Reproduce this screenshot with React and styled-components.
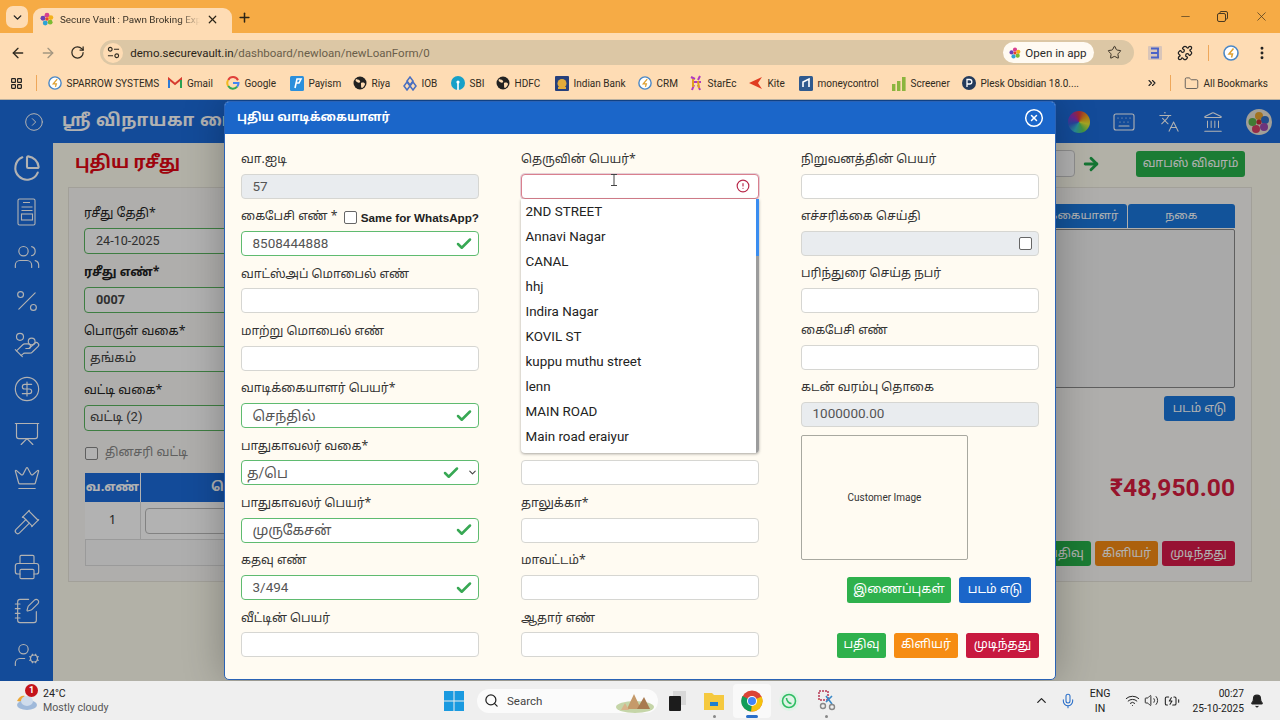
import React from "react";
import styled, { createGlobalStyle } from "styled-components";
import {
  ChevronDown, Plus, X, ArrowLeft, ArrowRight, RotateCw, Star, Puzzle, MoreVertical, ChevronsRight,
  Folder, Minus, Check, CircleAlert, CircleX, CircleChevronRight, ChartPie, Users, Percent, HandCoins,
  CircleDollarSign, Presentation, Crown, Gavel, Printer, NotebookPen, UserCog, Keyboard, Languages,
  Landmark, Search, Mic, Wifi, Volume2, BatteryCharging, Bell, ChevronUp, LayoutGrid,
} from "lucide-react";

const TA = `"Noto Sans Tamil", "Lohit Tamil", "Latha", "Noto Sans", "Liberation Sans", sans-serif`;
const UI = `Roboto, "Noto Sans Tamil", "Lohit Tamil", "Noto Sans", sans-serif`;

const Global = createGlobalStyle`
  html, body { margin: 0; padding: 0; width: 1280px; height: 720px; overflow: hidden; }
  * { box-sizing: border-box; }
  body { font-family: ${UI}; }
`;

const Screen = styled.div`display:flex;flex-direction:column;width:1280px;height:720px;overflow:hidden;background:#eee;`;

/* ---- Browser ---- */
const TabStrip = styled.div`display:flex;align-items:flex-end;height:33px;background:#f6ab45;padding-left:6px;flex:none;`;
const TabMenu = styled.div`width:22px;height:22px;margin-bottom:5px;border-radius:7px;background:#fedcb4;display:flex;align-items:center;justify-content:center;color:#222;`;
const Tab = styled.div`margin-left:5px;width:199px;height:25px;background:#fedcb4;border-radius:9px 9px 0 0;display:flex;align-items:center;padding:0 13px 3px 7px;gap:6px;`;
const TabTitle = styled.div`flex:1;font:9.9px Roboto,sans-serif;color:#3a3226;white-space:nowrap;overflow:hidden;
  -webkit-mask-image:linear-gradient(90deg,#000 85%,transparent);mask-image:linear-gradient(90deg,#000 85%,transparent);`;
const NewTab = styled.div`margin:0 0 6px 1px;width:22px;height:20px;display:flex;align-items:center;justify-content:center;color:#2b2417;`;
const WinControls = styled.div`margin-left:auto;display:flex;align-self:flex-start;padding-top:9px;gap:25.5px;padding-right:11.5px;color:#4a3a22;align-items:center;`;
const Toolbar = styled.div`height:34px;background:#fedcb4;display:flex;align-items:center;padding:5px 10px 0;color:#3a3226;flex:none;`;
const NavBtn = styled.div`width:30px;display:flex;color:${p=>p.$c||"#2f2a20"};line-height:0;padding-left:${p=>p.$p||0}px;`;
const Address = styled.div`margin-left:1px;width:1034px;height:25px;border-radius:13px;background:#dcc7a5;display:flex;align-items:center;padding:0 12.5px 0 3px;flex:none;`;
const SiteIcon = styled.div`width:20px;height:20px;border-radius:50%;background:#fedcb4;display:flex;align-items:center;justify-content:center;margin-right:7px;`;
const Url = styled.div`font:11.5px Roboto,sans-serif;color:#6a5e4a;flex:1;span{color:#2a2418;}`;
const AppPill = styled.div`width:91px;height:21px;border-radius:11px;background:#fffaf2;display:flex;align-items:center;gap:4px;padding-left:6px;font:11.6px Roboto,sans-serif;color:#2a2a2a;margin-right:12.5px;`;
const ToolIcons = styled.div`display:flex;align-items:center;margin-left:14px;gap:14.7px;line-height:0;`;
const Sep = styled.div`width:1px;height:16px;background:#eea75a;`;
const Bookmarks = styled.div`height:33px;background:#fedcb4;display:flex;align-items:center;padding-left:9.5px;font:10px Roboto,sans-serif;color:#302a20;border-bottom:1px solid #b9b0a0;flex:none;`;
const Bm = styled.div`display:flex;align-items:center;gap:5px;width:${p=>p.$w}px;white-space:nowrap;overflow:hidden;flex:none;`;
const BmDivider = styled.div`width:1px;height:16px;background:#eea75a;margin:${p=>p.$m};flex:none;`;

/* ---- App behind ---- */
const AppArea = styled.div`position:relative;height:581px;background:#1c6cdc;overflow:hidden;display:flex;flex-direction:column;flex:none;`;
const AppHeader = styled.div`height:43px;display:flex;align-items:center;color:#fff;flex:none;`;
const HeadToggle = styled.span`margin-left:24px;line-height:0;`;
const Brand = styled.div`font:bold 17px ${TA};letter-spacing:.6px;margin-left:18px;white-space:nowrap;flex:1;overflow:hidden;`;
const HeadIcons = styled.div`display:flex;align-items:center;width:204px;justify-content:space-between;margin-right:8px;`;
const Wheel = styled.div`width:22px;height:22px;border-radius:50%;background:conic-gradient(#e63946,#f4a21e,#ecec33,#5fd35f,#38c7d6,#3a62e0,#9933cc,#e63946);`;
const AppBody = styled.div`flex:1;display:flex;min-height:0;`;
const Sidebar = styled.div`width:53px;flex:none;display:flex;flex-direction:column;align-items:center;padding-top:11px;gap:16.3px;color:#fff;`;
const Main = styled.div`flex:1;background:#fffef0;padding:7px 35px 0 15px;display:flex;flex-direction:column;min-width:0;`;
const TopRow = styled.div`height:27px;display:flex;align-items:center;flex:none;padding-left:7px;`;
const PageTitle = styled.div`font:bold 17.5px ${TA};color:#e30613;flex:1;`;
const SmallInput = styled.div`width:60px;height:27px;border:1px solid #ccc;border-radius:4px;background:#fff;margin-right:6px;`;
const BackBtn = styled.div`margin-left:35px;width:109px;height:26px;border-radius:3px;background:#28b24b;color:#fff;font:12.2px ${TA};display:flex;align-items:center;justify-content:center;`;
const Card = styled.div`margin-top:10px;height:395px;background:#fbfaf6;border:1px solid #e8e6dc;padding:16px 16px 16px 15px;display:flex;justify-content:space-between;margin-right:-7px;flex:none;`;
const LeftCol = styled.div`width:400px;display:flex;flex-direction:column;`;
const BgLabel = styled.div`height:${p=>p.$h||27}px;flex:none;font:${p=>p.$b?"bold ":""}12.3px ${TA};color:#222;display:flex;align-items:flex-end;padding-bottom:6px;`;
const BgInput = styled.div`height:26px;flex:none;border:1px solid #5ab55f;border-radius:4px;padding-bottom:2px;font:${p=>p.$b?"bold ":""}${p=>p.$t?"13px":"12.6px"} ${UI};color:#444;display:flex;align-items:center;padding-left:${p=>p.$p||11}px;background:#fff;margin-bottom:6px;`;
const CheckRow = styled.div`display:flex;align-items:center;gap:7px;font:12.4px ${TA};color:#888;margin:6px 0 10px 1px;height:20px;flex:none;`;
const Tick = styled.div`width:13px;height:13px;border:1.5px solid #888;border-radius:2px;background:#fff;`;
const BgTable = styled.div`display:grid;grid-template-columns:56px 1fr;grid-template-rows:29px 38px 26px;margin-left:1px;font:13px ${TA};flex:none;`;
const Th = styled.div`background:#1c6cdc;color:#fff;font-weight:bold;display:flex;align-items:center;justify-content:${p=>p.$j||"center"};border-right:1px solid #fff;padding-left:${p=>p.$p||0}px;`;
const Td = styled.div`display:flex;align-items:center;justify-content:center;border-right:1px solid #ddd;border-bottom:1px solid #ddd;background:#fff;color:#333;padding:0 4px;`;
const TdWide = styled.div`grid-column:1 / 3;border:1px solid #ddd;border-top:0;background:#fafafa;`;
const TdInput = styled.div`width:100%;height:26px;border:1px solid #bbb;border-radius:4px;`;
const RightCol = styled.div`width:216px;display:flex;flex-direction:column;`;
const BgTabs = styled.div`display:grid;grid-template-columns:1fr 1fr;gap:1px;height:24px;flex:none;`;
const BgTab = styled.div`background:#1a78dd;color:#fff;font:11.6px ${TA};display:flex;align-items:center;justify-content:${p=>p.$j||"center"};border-radius:3px 3px 0 0;padding-right:${p=>p.$p||0}px;`;
const BgPanel = styled.div`height:159px;border:1px solid #888;border-radius:2px;margin-top:1px;background:#f2f2f2;flex:none;`;
const BgEnd = styled.div`display:flex;justify-content:flex-end;gap:4px;margin-top:${p=>p.$m}px;flex:none;`;
const BgBtn = styled.div`width:${p=>p.$w}px;height:25px;border-radius:3px;background:${p=>p.$c};color:#fff;font:12.2px ${TA};display:flex;align-items:center;justify-content:center;`;
const Amount = styled.div`font:bold 24.6px Roboto,sans-serif;color:#d91c3f;text-align:right;margin-top:52px;line-height:30px;flex:none;`;

/* ---- Modal ---- */
const Overlay = styled.div`position:absolute;inset:0;background:rgba(0,0,0,.3);display:flex;justify-content:center;padding-top:1px;`;
const Modal = styled.div`width:832px;height:579px;background:#fffbf2;border:1px solid #2a62b5;border-radius:5px;box-shadow:0 0 40px rgba(0,0,0,.28);display:flex;flex-direction:column;overflow:hidden;flex:none;`;
const ModalHead = styled.div`height:32px;background:#1b66c9;color:#fff;display:flex;align-items:center;justify-content:space-between;padding:0 11px 0 12px;font:bold 12px ${TA};flex:none;`;
const ModalGrid = styled.div`padding:7.5px 15px 0 16px;display:grid;grid-template-columns:238px 238px 238px;column-gap:42px;`;
const Col = styled.div`display:flex;flex-direction:column;position:relative;`;
const Field = styled.div`display:flex;flex-direction:column;height:${p=>p.$pitch||57.33}px;flex:none;`;
const Label = styled.div`height:${p=>(p.$pitch||57.33)-25}px;padding-top:5px;display:flex;align-items:center;justify-content:space-between;font:12.2px ${TA};color:#333;white-space:nowrap;`;
const borders = { plain:"#d6d6d2", valid:"#5fbb70", invalid:"#d9808e", disabled:"#d6d6d2" };
const Box = styled.div`position:relative;height:25px;flex:none;border:${p=>p.$s==="valid"?"1.5px":"1px"} solid ${p=>borders[p.$s||"plain"]};border-radius:4px;
  background:${p=>p.$s==="disabled"?"#e9ecef":"#fff"};display:flex;align-items:center;justify-content:space-between;padding:0 ${p=>p.$r||5.5}px 0 ${p=>p.$l||10.5}px;
  font:${p=>p.$n?"13.5px":"14px"}/1 ${UI};color:#555;box-shadow:${p=>p.$s==="invalid"?"0 0 0 1px rgba(180,130,170,.35)":"none"};`;
const Same = styled.span`display:flex;align-items:center;gap:4px;font:bold 11.7px "Liberation Sans",sans-serif;color:#222;`;
const SmallCheck = styled.span`width:13px;height:13px;border:1px solid #666;border-radius:2px;background:#fff;display:inline-block;`;
const SelectEnd = styled.span`display:flex;align-items:center;gap:7.5px;margin-right:-5.5px;color:#444;`;
const Dropdown = styled.div`position:absolute;left:0;top:57px;width:238px;height:254.5px;background:#fff;box-shadow:0 1px 3px rgba(0,0,0,.35);border-radius:0 0 4px 4px;display:flex;z-index:2;overflow:hidden;`;
const DItems = styled.div`flex:1;`;
const DItem = styled.div`height:25px;padding-left:4.5px;font:13.4px/25px Roboto,sans-serif;color:#222;`;
const Scroll = styled.div`width:3px;background:#9c9c9c;`;
const Thumb = styled.div`height:57px;background:#3a8df0;`;
const ICursor = styled.div`position:absolute;left:88px;top:-1px;line-height:0;`;
const ImgBox = styled.div`margin-top:8.5px;width:167px;height:125px;flex:none;border:1px solid #a8a8a0;border-radius:2px;display:flex;align-items:center;justify-content:center;font:10px Roboto,sans-serif;color:#333;`;
const BtnRow = styled.div`display:flex;justify-content:flex-end;gap:8px;margin-top:${p=>p.$m}px;padding-right:${p=>p.$r||0}px;flex:none;`;
const Btn = styled.div`width:${p=>p.$w}px;height:25.5px;border-radius:2.5px;background:${p=>p.$c};color:#fff;font:12.4px ${TA};display:flex;align-items:center;justify-content:center;`;

/* ---- Taskbar ---- */
const Taskbar = styled.div`height:39px;background:#efefef;display:flex;align-items:center;color:#222;flex:none;`;
const Weather = styled.div`display:flex;align-items:center;gap:4px;width:444px;padding-left:15px;position:relative;flex:none;`;
const Badge = styled.div`position:absolute;left:25px;top:-3px;width:13px;height:13px;border-radius:50%;background:#c4141c;color:#fff;font:bold 9px/13px Roboto,sans-serif;text-align:center;`;
const WText = styled.div`font:10.6px/14px Roboto,sans-serif;color:#222;span{display:block;color:#555;}`;
const WinWrap = styled.span`line-height:0;`;
const SearchBox = styled.div`margin-left:13px;width:181px;height:24px;border-radius:12px;background:#fbfbfb;display:flex;align-items:center;padding:0 3px 0 7px;gap:8px;font:11.5px Roboto,sans-serif;color:#444;`;
const SearchWord = styled.span`flex:1;`;
const Center = styled.div`display:flex;align-items:center;`;
const Task = styled.div`width:37.5px;height:34px;display:flex;align-items:center;justify-content:center;position:relative;background:${p=>p.$on?"#f9f9f9":"transparent"};border-radius:4px;`;
const Dot = styled.div`position:absolute;bottom:0;left:50%;margin-left:${p=>p.$w?-p.$w/2:-1.5}px;width:${p=>p.$w||3}px;height:2.5px;border-radius:2px;background:${p=>p.$c||"#888"};`;
const Tray = styled.div`margin-left:auto;display:flex;align-items:center;padding-right:16px;`;
const Lang = styled.div`font:10.6px/15px Roboto,sans-serif;text-align:center;width:32px;margin:0 8.5px 0 8px;color:#222;`;
const Clock = styled.div`font:10.2px/15px Roboto,sans-serif;text-align:right;margin:0 6px 0 13px;color:#222;`;
const TrayIcons = styled.div`display:flex;gap:${p=>p.$g}px;align-items:center;color:#222;`;

const Favicon = ({ s = 14 }) => (
  <svg width={s} height={s} viewBox="0 0 16 16"><circle cx="8" cy="3.6" r="2.8" fill="#d93f8f"/><circle cx="12.4" cy="6.4" r="2.8" fill="#f3b11b"/><circle cx="11.6" cy="11.6" r="2.8" fill="#7cbb32"/><circle cx="6" cy="12.6" r="2.8" fill="#2ea3d6"/><circle cx="3.4" cy="7.2" r="2.8" fill="#6b3fb5"/><circle cx="8" cy="8" r="2" fill="#e8472c"/></svg>
);
const Sparrow = ({ s = 14 }) => <svg width={s} height={s} viewBox="0 0 16 16"><circle cx="8" cy="8" r="7" fill="#fff" stroke="#4b87c5" strokeWidth="1.6"/><path d="M10.5 3.5 6 9h3.5l-1 3.5" fill="none" stroke="#e0a030" strokeWidth="1.5"/></svg>;
const Gmail = () => <svg width="14" height="12" viewBox="0 0 14 12"><path d="M1 11V2l6 5 6-5v9" fill="none" stroke="#d63b2f" strokeWidth="2"/><path d="M1 11V3" stroke="#2c7ad6" strokeWidth="2"/><path d="M13 11V3" stroke="#2ca052" strokeWidth="2"/></svg>;
const Google = () => <svg width="14" height="14" viewBox="0 0 14 14"><path d="M12 4.2A5.5 5.5 0 0 0 2.2 4" fill="none" stroke="#e0403a" strokeWidth="2"/><path d="M2.2 4a5.5 5.5 0 0 0 0 6" fill="none" stroke="#f2b91f" strokeWidth="2"/><path d="M2.2 10a5.5 5.5 0 0 0 9 .6" fill="none" stroke="#35a853" strokeWidth="2"/><path d="M7 7h5.5a5.5 5.5 0 0 1-1.3 3.6" fill="none" stroke="#4285f4" strokeWidth="2"/></svg>;
const Payism = () => <svg width="14" height="15" viewBox="0 0 14 15"><rect width="14" height="15" rx="1.5" fill="#2a8fdc"/><path d="M5 12 7 3h4L9 7H6" fill="none" stroke="#fff" strokeWidth="1.6"/></svg>;
const Globe = () => <svg width="14" height="14" viewBox="0 0 14 14"><circle cx="7" cy="7" r="6.5" fill="#222"/><path d="M3 3c2 1 3 0 4 2S5 7 4 6 2 5 3 3zm5 4c2-1 4 0 4 1s-2 4-3 4-1-2-1-5z" fill="#fedcb4"/></svg>;
const Iob = () => <svg width="14" height="15" viewBox="0 0 14 15"><g fill="none" stroke="#4a6fc0" strokeWidth="1.5"><path d="M7 1 10 5 7 9 4 5z"/><path d="M4 6 7 10 4 14 1 10z"/><path d="M10 6 13 10 10 14 7 10z"/></g></svg>;
const Sbi = () => <svg width="14" height="14" viewBox="0 0 14 14"><circle cx="7" cy="7" r="7" fill="#16a0c8"/><circle cx="7" cy="6" r="1.6" fill="#fff"/><rect x="6.2" y="7" width="1.6" height="7" fill="#fff"/></svg>;
const Indian = () => <svg width="14" height="15" viewBox="0 0 14 15"><rect width="14" height="15" rx="1" fill="#26407c"/><circle cx="7" cy="7.5" r="4.5" fill="#e2ac3b"/><rect x="3" y="11" width="8" height="2" fill="#e2ac3b"/></svg>;
const Star2 = () => <svg width="14" height="16" viewBox="0 0 14 16"><path d="M2 2 6 4M11 1 9 5M3 7l9 0M5 10 3 15M9 10l2 5" stroke="#b03ac0" strokeWidth="2"/><path d="M4 4 4 12M9 6 10 13" stroke="#e0a020" strokeWidth="2"/></svg>;
const Kite = () => <svg width="14" height="12" viewBox="0 0 14 12"><path d="M13 0 0 6l13 6-4-6z" fill="#e03c22"/></svg>;
const Money = () => <svg width="14" height="15" viewBox="0 0 14 15"><rect width="14" height="15" rx="1.5" fill="#2f5a8f"/><path d="M4 11V6l6-3v8" fill="none" stroke="#fff" strokeWidth="1.6"/></svg>;
const Screener = () => <svg width="14" height="15" viewBox="0 0 14 15"><rect x="0" y="8" width="3.4" height="7" fill="#8bb53e"/><rect x="5" y="5" width="3.4" height="10" fill="#8bb53e"/><rect x="10" y="1" width="3.6" height="14" fill="#8bb53e"/></svg>;
const Plesk = () => <svg width="14" height="14" viewBox="0 0 14 14"><circle cx="7" cy="7" r="7" fill="#243b5c"/><path d="M5 11V3.5h2.6a2 2 0 0 1 0 4.5H5" fill="none" stroke="#fff" strokeWidth="1.3"/></svg>;
const Sliders = () => <svg width="13" height="13" viewBox="0 0 14 14" fill="none" stroke="#2f2a20" strokeWidth="1.2"><circle cx="3.5" cy="3.5" r="2"/><path d="M7.5 3.5H13M1 10.5h5.5"/><circle cx="10.5" cy="10.5" r="2"/></svg>;
const ExtS = () => <svg width="14" height="14" viewBox="0 0 14 14"><rect width="14" height="14" rx="1" fill="#6a7fc8" opacity=".25"/><path d="M3 2.5h8M3 7h7M3 11.5h8M10 2.5v9" stroke="#4a62c8" strokeWidth="1.8" fill="none"/></svg>;
const WinLogo = () => <svg width="20" height="20" viewBox="0 0 20 20"><path d="M0 0h9.5v9.5H0zM10.5 0H20v9.5h-9.5zM0 10.5h9.5V20H0zM10.5 10.5H20V20h-9.5z" fill="#1a9ae0"/></svg>;
const Cloud = () => <svg width="24" height="24" viewBox="0 0 24 24"><path d="M2 12c2-5 6-6 8-5-2 2-1 5-2 6z" fill="#eda735"/><ellipse cx="12" cy="16" rx="10" ry="5" fill="#9fb9da"/><ellipse cx="12" cy="12" rx="6" ry="5" fill="#cfdcec"/></svg>;
const Scene = () => <svg width="40" height="24" viewBox="0 0 40 24"><ellipse cx="20" cy="18" rx="19" ry="6" fill="#c5d5a8"/><path d="M12 20 19 5l7 15z" fill="#c59a6a"/><path d="M22 20 29 8l6 12z" fill="#a87a50"/><path d="M6 21l4-7 4 7z" fill="#d8b48a"/></svg>;
const Stack = () => <svg width="18" height="20" viewBox="0 0 18 20"><rect x="5" y="0" width="13" height="14" fill="#d8d8d8"/><rect x="1" y="5" width="12" height="15" rx="1" fill="#1c1c1c"/></svg>;
const Explorer = () => <svg width="22" height="22" viewBox="0 0 22 22"><path d="M1 3h8l2 2h10v15H1z" fill="#f5c93f"/><rect x="7" y="12" width="8" height="4" fill="#1f7fd0"/></svg>;
const Chrome = () => <svg width="22" height="22" viewBox="0 0 22 22"><circle cx="11" cy="11" r="10.5" fill="#db4437"/><path d="M11 11 20.5 6.5A10.5 10.5 0 0 1 10 21.5z" fill="#f4c20d"/><path d="M11 11 10 21.5A10.5 10.5 0 0 1 1.5 6z" fill="#0f9d58"/><circle cx="11" cy="11" r="5" fill="#fff"/><circle cx="11" cy="11" r="4" fill="#4285f4"/></svg>;
const Whats = () => <svg width="20" height="20" viewBox="0 0 20 20"><circle cx="10" cy="10" r="10" fill="#dff3e6"/><circle cx="10" cy="10" r="6.5" fill="none" stroke="#2fbd63" strokeWidth="1.6"/><path d="M7.5 7c0 3 2.5 5.5 5 5.5" fill="none" stroke="#2fbd63" strokeWidth="1.6"/></svg>;
const Snip = () => <svg width="18" height="22" viewBox="0 0 18 22"><rect x="1" y="1" width="9" height="9" fill="none" stroke="#b83a55" strokeWidth="1.5" strokeDasharray="2 1"/><path d="M8 12 14 6M8 6 14 14" stroke="#3a8ac8" strokeWidth="1.6"/><circle cx="5" cy="16" r="2.5" fill="none" stroke="#888" strokeWidth="1.4"/><circle cx="14" cy="17" r="2.5" fill="none" stroke="#888" strokeWidth="1.4"/></svg>;
const Flower = () => <svg width="26" height="26" viewBox="0 0 26 26"><circle cx="13" cy="13" r="13" fill="#e8e4d8"/><circle cx="13" cy="7" r="4" fill="#e8a530"/><circle cx="19" cy="11" r="4" fill="#2f6fc8"/><circle cx="18" cy="18" r="4" fill="#9b4bb0"/><circle cx="10" cy="20" r="4" fill="#d83f66"/><circle cx="6.5" cy="13" r="4" fill="#5db04a"/><circle cx="13" cy="13" r="2.6" fill="#c52f3a"/></svg>;
const IBeam = () => <svg width="8" height="12" viewBox="0 0 8 12" fill="none" stroke="#444" strokeWidth="1"><path d="M1 .5h6M1 11.5h6M4 .5v11"/></svg>;
const ClipDoc = () => <svg width="24" height="28" viewBox="0 0 24 28" fill="none" stroke="currentColor" strokeWidth="1.1"><rect x="3" y="1" width="17" height="26" rx="1.5"/><path d="M8 4.5h7M6.5 9h11M6.5 12.5h11"/><rect x="6.5" y="16" width="11" height="6"/></svg>;

const valid = <Check size={18} strokeWidth={3.4} color="#38a854" />;
const StreetItems = ["2ND STREET","Annavi Nagar","CANAL","hhj","Indira Nagar","KOVIL ST","kuppu muthu street","lenn","MAIN ROAD","Main road eraiyur"];
const marks = [
  [<Sparrow/>, "SPARROW SYSTEMS", 120.5],[<Gmail/>, "Gmail", 57.5],[<Google/>, "Google", 64],[<Payism/>, "Payism", 63],
  [<Globe/>, "Riya", 50],[<Iob/>, "IOB", 48],[<Sbi/>, "SBI", 45],[<Globe/>, "HDFC", 59],[<Indian/>, "Indian Bank", 83],
  [<Sparrow/>, "CRM", 51],[<Star2/>, "StarEc", 60],[<Kite/>, "Kite", 50],[<Money/>, "moneycontrol", 93],[<Screener/>, "Screener", 70],[<Plesk/>, "Plesk Obsidian 18.0....", 184],
];

export default function App() {
  return (
    <Screen>
      <Global />
      <TabStrip>
        <TabMenu><ChevronDown size={13} strokeWidth={2.6} /></TabMenu>
        <Tab>
          <Favicon />
          <TabTitle>Secure Vault : Pawn Broking Exp</TabTitle>
          <X size={13} strokeWidth={2.2} color="#2b2417" />
        </Tab>
        <NewTab><Plus size={15} strokeWidth={2.4} /></NewTab>
        <WinControls>
          <Minus size={13} strokeWidth={1.3} />
          <svg width="11" height="11" viewBox="0 0 11 11" fill="none" stroke="#4a3a22" strokeWidth="1"><rect x=".5" y="2.5" width="8" height="8" rx="1.5"/><path d="M3 2.5V1.5a1 1 0 0 1 1-1h5a1.5 1.5 0 0 1 1.5 1.5v5a1 1 0 0 1-1 1h-1"/></svg>
          <X size={15} strokeWidth={1.2} />
        </WinControls>
      </TabStrip>
      <Toolbar>
        <NavBtn><ArrowLeft size={16} strokeWidth={2} /></NavBtn>
        <NavBtn $c="#a39680"><ArrowRight size={16} strokeWidth={2} /></NavBtn>
        <NavBtn><RotateCw size={15} strokeWidth={2} /></NavBtn>
        <Address>
          <SiteIcon><Sliders /></SiteIcon>
          <Url><span>demo.securevault.in</span>/dashboard/newloan/newLoanForm/0</Url>
          <AppPill><Favicon s={12} />Open in app</AppPill>
          <Star size={15} strokeWidth={1.6} color="#3a3226" />
        </Address>
        <ToolIcons>
          <ExtS />
          <Puzzle size={16} strokeWidth={1.9} color="#222" />
          <Sep />
          <Sparrow s={16} />
          <MoreVertical size={16} strokeWidth={2.4} color="#222" />
        </ToolIcons>
      </Toolbar>
      <Bookmarks>
        <LayoutGrid size={13} strokeWidth={2.2} color="#222" />
        <BmDivider $m="0 11px 0 13px" />
        {marks.map(([icon, name, w]) => (
          <Bm key={name} $w={w}>{icon}<span>{name}</span></Bm>
        ))}
        <ChevronsRight size={12} strokeWidth={2.2} color="#222" />
        <BmDivider $m="0 13px 0 12px" />
        <Bm $w={90}><Folder size={15} strokeWidth={1.4} color="#555" /><span>All Bookmarks</span></Bm>
      </Bookmarks>

      <AppArea>
        <AppHeader>
          <HeadToggle><CircleChevronRight size={20} strokeWidth={1.2} /></HeadToggle>
          <Brand>ஶ்ரீ விநாயகா பை</Brand>
          <HeadIcons>
            <Wheel />
            <Keyboard size={24} strokeWidth={1.1} />
            <Languages size={22} strokeWidth={1.1} />
            <Landmark size={22} strokeWidth={1.1} />
            <Flower />
          </HeadIcons>
        </AppHeader>
        <AppBody>
          <Sidebar>
            <ChartPie size={28} strokeWidth={1.8} />
            <ClipDoc />
            <Users size={28} strokeWidth={1} />
            <Percent size={28} strokeWidth={1} />
            <HandCoins size={28} strokeWidth={1} />
            <CircleDollarSign size={28} strokeWidth={1} />
            <Presentation size={28} strokeWidth={1} />
            <Crown size={28} strokeWidth={1} />
            <Gavel size={28} strokeWidth={1} />
            <Printer size={28} strokeWidth={1} />
            <NotebookPen size={28} strokeWidth={1} />
            <UserCog size={28} strokeWidth={1} />
          </Sidebar>
          <Main>
            <TopRow>
              <PageTitle>புதிய ரசீது</PageTitle>
              <SmallInput />
              <ArrowRight size={20} strokeWidth={3.4} color="#1fa84a" />
              <BackBtn>வாபஸ் விவரம்</BackBtn>
            </TopRow>
            <Card>
              <LeftCol>
                <BgLabel $h={24}>ரசீது தேதி*</BgLabel>
                <BgInput>24-10-2025</BgInput>
                <BgLabel $b>ரசீது எண்*</BgLabel>
                <BgInput $b>0007</BgInput>
                <BgLabel>பொருள் வகை*</BgLabel>
                <BgInput $p={5} $t>தங்கம்</BgInput>
                <BgLabel>வட்டி வகை*</BgLabel>
                <BgInput $p={5} $t>வட்டி (2)</BgInput>
                <CheckRow><Tick />தினசரி வட்டி</CheckRow>
                <BgTable>
                  <Th>வ.எண்</Th><Th $j="flex-start" $p={70}>பொருள்</Th>
                  <Td>1</Td><Td><TdInput /></Td>
                  <TdWide />
                </BgTable>
              </LeftCol>
              <RightCol>
                <BgTabs>
                  <BgTab $j="flex-end" $p={8}>வாடிக்கையாளர்</BgTab>
                  <BgTab>நகை</BgTab>
                </BgTabs>
                <BgPanel />
                <BgEnd $m={8}><BgBtn $w={71} $c="#1a78dd">படம் எடு</BgBtn></BgEnd>
                <Amount>₹48,950.00</Amount>
                <BgEnd $m={38}>
                  <BgBtn $w={50} $c="#28b24b">பதிவு</BgBtn>
                  <BgBtn $w={63} $c="#f68c13">கிளியர்</BgBtn>
                  <BgBtn $w={73} $c="#d81b4a">முடிந்தது</BgBtn>
                </BgEnd>
              </RightCol>
            </Card>
          </Main>
        </AppBody>

        <Overlay>
          <Modal>
            <ModalHead>
              புதிய வாடிக்கையாளர்
              <CircleX size={20} strokeWidth={1.8} />
            </ModalHead>
            <ModalGrid>
              <Col>
                <Field><Label>வா.ஐடி</Label><Box $s="disabled" $n>57</Box></Field>
                <Field>
                  <Label>கைபேசி எண் *<Same><SmallCheck />Same for WhatsApp?</Same></Label>
                  <Box $s="valid" $n>8508444888{valid}</Box>
                </Field>
                <Field><Label>வாட்ஸ்அப் மொபைல் எண்</Label><Box /></Field>
                <Field><Label>மாற்று மொபைல் எண்</Label><Box /></Field>
                <Field><Label>வாடிக்கையாளர் பெயர்*</Label><Box $s="valid">செந்தில்{valid}</Box></Field>
                <Field>
                  <Label>பாதுகாவலர் வகை*</Label>
                  <Box $s="valid" $l={5}>த/பெ<SelectEnd>{valid}<ChevronDown size={11} strokeWidth={2.4} /></SelectEnd></Box>
                </Field>
                <Field><Label>பாதுகாவலர் பெயர்*</Label><Box $s="valid">முருகேசன்{valid}</Box></Field>
                <Field><Label>கதவு எண்</Label><Box $s="valid" $n>3/494{valid}</Box></Field>
                <Field><Label>வீட்டின் பெயர்</Label><Box /></Field>
              </Col>
              <Col>
                <Field><Label>தெருவின் பெயர்*</Label>
                  <Box $s="invalid" $r={8}><span /><CircleAlert size={14} strokeWidth={2} color="#b8294a" /><ICursor><IBeam /></ICursor></Box>
                </Field>
                <Dropdown>
                  <DItems>{StreetItems.map(i => <DItem key={i}>{i}</DItem>)}</DItems>
                  <Scroll><Thumb /></Scroll>
                </Dropdown>
                <Field><Label /><Box /></Field>
                <Field><Label /><Box /></Field>
                <Field><Label /><Box /></Field>
                <Field><Label /><Box /></Field>
                <Field><Label /><Box /></Field>
                <Field><Label>தாலுக்கா*</Label><Box /></Field>
                <Field><Label>மாவட்டம்*</Label><Box /></Field>
                <Field><Label>ஆதார் எண்</Label><Box /></Field>
              </Col>
              <Col>
                <Field $pitch={57}><Label $pitch={57}>நிறுவனத்தின் பெயர்</Label><Box /></Field>
                <Field $pitch={57}><Label $pitch={57}>எச்சரிக்கை செய்தி</Label><Box $s="disabled" $r={6}><span /><SmallCheck /></Box></Field>
                <Field $pitch={57}><Label $pitch={57}>பரிந்துரை செய்த நபர்</Label><Box /></Field>
                <Field $pitch={57}><Label $pitch={57}>கைபேசி எண்</Label><Box /></Field>
                <Field $pitch={57}><Label $pitch={57}>கடன் வரம்பு தொகை</Label><Box $s="disabled" $n>1000000.00</Box></Field>
                <ImgBox>Customer Image</ImgBox>
                <BtnRow $m={17} $r={8}>
                  <Btn $w={104} $c="#2fb14d">இணைப்புகள்</Btn>
                  <Btn $w={72} $c="#1b66c9">படம் எடு</Btn>
                </BtnRow>
                <BtnRow $m={30}>
                  <Btn $w={49} $c="#2fb14d">பதிவு</Btn>
                  <Btn $w={64} $c="#f68c13">கிளியர்</Btn>
                  <Btn $w={73} $c="#c8193f">முடிந்தது</Btn>
                </BtnRow>
              </Col>
            </ModalGrid>
          </Modal>
        </Overlay>
      </AppArea>

      <Taskbar>
        <Weather>
          <Cloud />
          <Badge>1</Badge>
          <WText>24°C<span>Mostly cloudy</span></WText>
        </Weather>
        <Center>
          <WinWrap><WinLogo /></WinWrap>
          <SearchBox>
            <Search size={15} strokeWidth={2} color="#222" />
            <SearchWord>Search</SearchWord>
            <Scene />
          </SearchBox>
          <Task><Stack /></Task>
          <Task><Explorer /><Dot /></Task>
          <Task $on><Chrome /><Dot $w={12} $c="#2a6fc9" /></Task>
          <Task><Whats /></Task>
          <Task><Snip /><Dot /></Task>
        </Center>
        <Tray>
          <TrayIcons $g={11.5}>
            <ChevronUp size={15} strokeWidth={2} />
            <Mic size={16} strokeWidth={1.6} color="#2a6fc9" />
          </TrayIcons>
          <Lang>ENG<br/>IN</Lang>
          <TrayIcons $g={4.5}>
            <Wifi size={15} strokeWidth={1.6} />
            <Volume2 size={15} strokeWidth={1.5} />
            <BatteryCharging size={16} strokeWidth={1.6} />
          </TrayIcons>
          <Clock>00:27<br/>25-10-2025</Clock>
          <Bell size={14} strokeWidth={2} fill="#222" />
        </Tray>
      </Taskbar>
    </Screen>
  );
}
